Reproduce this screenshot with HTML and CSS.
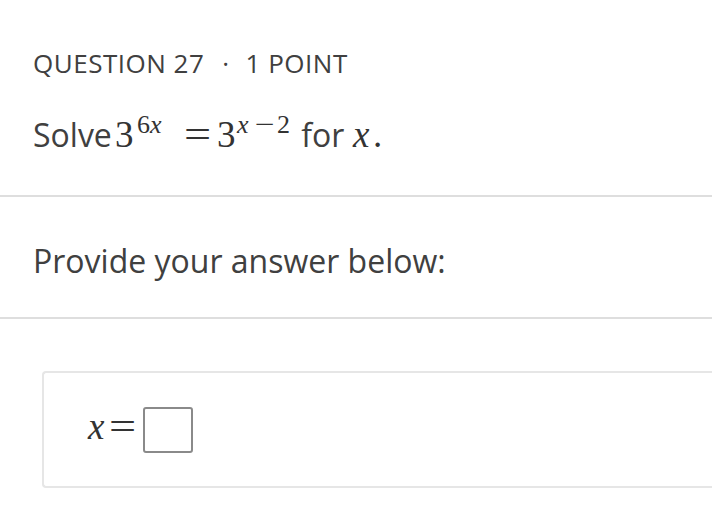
FILE: index.html
```html
<!DOCTYPE html>
<html lang="en">
<head>
<meta charset="utf-8">
<title>Question 27</title>
<link rel="stylesheet" href="styles.css">
</head>
<body>
<div class="question">
  <div class="q-head">QUESTION 27<span class="sep">·</span>1 POINT</div>
  <div class="prompt">Solve<svg class="eqn eqn-main" width="178" height="43" viewBox="0 0 178 43"><text class="m-base" x="0" y="34">3</text><text class="m-sup" x="22" y="20">6</text><text class="m-sup m-it" x="35" y="20">x</text><text class="m-base" transform="translate(69 34) scale(1.3 1)">=</text><text class="m-base" x="102" y="34">3</text><text class="m-sup m-it" x="122" y="20">x</text><text class="m-sup" transform="translate(140 20) scale(1.35 1)">−</text><text class="m-sup" x="162" y="20">2</text></svg> for <svg class="eqn eqn-var" width="30" height="43" viewBox="0 0 30 43"><text class="m-base m-it" x="0" y="34">x</text><text class="m-base" x="20" y="34">.</text></svg></div>
</div>
<div class="rule"></div>
<div class="instructions">
  <div class="lead">Provide your answer below:</div>
</div>
<div class="rule"></div>
<div class="answer">
  <div class="answer-box">
    <svg class="eqn eqn-ans" width="55" height="46" viewBox="0 0 55 46"><text class="m-base m-it" x="0" y="32">x</text><text class="m-base" transform="translate(21 32) scale(1.3 1)">=</text></svg>
    <span class="blank"></span>
  </div>
</div>
</body>
</html>
```
FILE: styles.css
```css
html, body {
  margin: 0;
  padding: 0;
  background: #fff;
}
body {
  font-family: "Open Sans", "Liberation Sans", sans-serif;
  color: #404040;
}
.question {
  padding: 45px 33px 38px;
}
.q-head {
  font-size: 26px;
  line-height: 36px;
  letter-spacing: 0.5px;
}
.sep {
  margin: 0 16px 0 18px;
}
.prompt {
  margin-top: 32px;
  font-size: 32px;
  line-height: 44px;
}
.eqn {
  display: inline-block;
  overflow: visible;
}
.eqn-main {
  margin-left: 3px;
  vertical-align: -9px;
}
.eqn-var {
  vertical-align: -9px;
}
.eqn text {
  font-family: "Liberation Serif", "DejaVu Serif", serif;
  fill: #333;
}
.m-base {
  font-size: 37px;
}
.m-sup {
  font-size: 26px;
}
.m-it {
  font-style: italic;
}
.rule {
  border-top: 2px solid #dedede;
}
.instructions {
  padding: 42px 33px 34px;
}
.lead {
  font-size: 32px;
  line-height: 44px;
}
.answer {
  padding: 52px 0 0 42px;
}
.answer-box {
  display: flex;
  align-items: center;
  height: 113px;
  border: 2px solid #e6e6e6;
  border-right: 0;
  border-radius: 4px 0 0 4px;
  padding-left: 44px;
}
.eqn-ans {
  flex: none;
}
.blank {
  width: 46px;
  height: 42px;
  border: 2px solid #8a8a8a;
  border-radius: 3px;
}
```
